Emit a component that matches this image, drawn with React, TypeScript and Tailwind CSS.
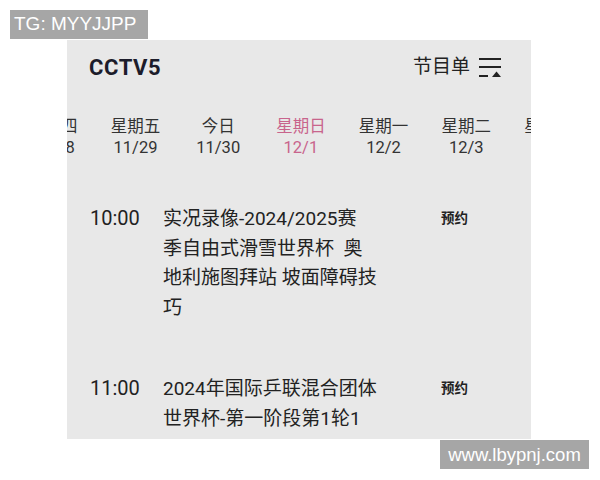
import React from "react";

const days = [
  { w: "星期四", d: "11/28" },
  { w: "星期五", d: "11/29" },
  { w: "今日", d: "11/30" },
  { w: "星期日", d: "12/1", active: true },
  { w: "星期一", d: "12/2" },
  { w: "星期二", d: "12/3" },
  { w: "星期三", d: "12/4" },
];

const programs = [
  { t: "10:00", title: "实况录像-2024/2025赛\n季自由式滑雪世界杯  奥\n地利施图拜站 坡面障碍技\n巧" },
  { t: "11:00", title: "2024年国际乒联混合团体\n世界杯-第一阶段第1轮1" },
];

const font = { fontFamily: "Roboto, 'Noto Sans CJK SC', sans-serif" };

export default function App() {
  return (
    <div className="relative w-[600px] h-[480px] bg-white overflow-hidden" style={font}>
      <div className="ml-[67px] mt-[40px] w-[464px] h-[399px] bg-[#e8e8e8] overflow-hidden flex flex-col">
        <div className="h-[54px] flex items-center justify-between pl-[22px] pr-[30px]">
          <span className="text-[22px] font-bold text-[#1c1c2b] tracking-[0.6px]">CCTV5</span>
          <div className="flex items-center gap-[9px]">
            <span className="text-[19px] text-[#222]">节目单</span>
            <svg width="22" height="22" viewBox="0 0 22 22" className="text-[#222]">
              <rect x="0" y="2" width="22" height="2" fill="currentColor" />
              <rect x="0" y="10" width="22" height="2" fill="currentColor" />
              <rect x="0" y="19" width="9" height="2" fill="currentColor" />
              <path d="M13 21 L17.5 15.5 L22 21 Z" fill="currentColor" />
            </svg>
          </div>
        </div>
        <div className="flex ml-[-55.5px] mt-[22px] w-max">
          {days.map((x) => (
            <div
              key={x.d}
              className={`w-[82.7px] flex flex-col items-center text-[16.5px] leading-[21px] ${x.active ? "text-[#c8648c]" : "text-[#333]"}`}
            >
              <span>{x.w}</span>
              <span>{x.d}</span>
            </div>
          ))}
        </div>
        <div className="flex flex-col gap-[52px] mt-[46px]">
          {programs.map((p) => (
            <div key={p.t} className="flex items-start pl-[23px] text-[#222]">
              <span className="w-[73px] text-[20px] leading-[29.5px]">{p.t}</span>
              <span className="w-[224px] text-[19px] leading-[29.5px] whitespace-pre">{p.title}</span>
              <span className="ml-[54px] text-[13.5px] font-bold leading-[29.5px]">预约</span>
            </div>
          ))}
        </div>
      </div>
      <div className="absolute left-[10px] top-[10px] w-[138px] h-[29px] bg-[#a6a6a6] text-white text-[19px] flex items-center pl-[4px]" style={{ fontFamily: "'Liberation Sans', Arial, sans-serif" }}>
        TG: MYYJJPP
      </div>
      <div className="absolute left-[440px] top-[440px] w-[149px] h-[29px] bg-[#a6a6a6] text-white text-[18.5px] flex items-center justify-center" style={{ fontFamily: "'Liberation Sans', Arial, sans-serif" }}>
        www.lbypnj.com
      </div>
    </div>
  );
}
